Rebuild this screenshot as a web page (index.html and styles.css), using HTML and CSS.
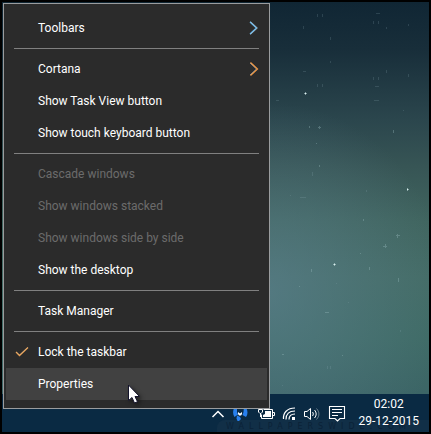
FILE: index.html
```html
<!DOCTYPE html>
<html lang="en">
<head>
<meta charset="utf-8">
<title>Taskbar menu</title>
<link rel="stylesheet" href="styles.css">
</head>
<body>
<main class="screen">
  <div class="wallpaper">
    <svg class="stars" width="166" height="392" viewBox="265 2 166 392" aria-hidden="true">
      <g fill="#d9f0f0">
        <path d="M305 93h1v1h-1zM407 189h1v1h-1zM334 264h1v1h-1z"/>
        <path opacity=".5" d="M305 92h1v3h-1zM304 93h3v1h-3zM407 188h1v3h-1zM407 189h2v1h-2zM334 263h1v3h-1zM333 264h3v1h-3z"/>
      </g>
      <g fill="#9cbcc0" opacity=".35">
        <path d="M319 126h1v3h-1zM318 127h3v1h-3zM309 126h1v2h-1zM393 130h1v3h-1zM316 143h1v1h-1zM319 165h1v2h-1zM363 219h1v2h-1zM397 234h1v4h-1zM396 235h4v1h-4zM385 244h1v4h-1zM383 246h4v1h-4zM360 253h1v1h-1zM369 267h1v3h-1zM311 269h1v3h-1zM398 278h1v4h-1zM299 286h1v1h-1zM325 312h4v1h-4zM282 354h2v1h-2zM342 355h1v1h-1z"/>
      </g>
      <g fill="#8fb0b8" opacity=".2">
        <path d="M376 13h4v1h-4zM303 26h1v3h-1zM386 27h1v2h-1zM408 24h1v2h-1zM373 21h1v3h-1zM378 21h1v3h-1zM317 14h1v3h-1zM322 14h1v3h-1zM330 37h1v3h-1zM330 61h1v2h-1zM303 71h3v1h-3zM386 70h1v3h-1zM408 74h1v3h-1zM375 86h4v1h-4zM373 77h1v3h-1zM378 77h1v3h-1zM317 84h1v3h-1zM322 84h1v3h-1zM276 100h3v1h-3zM374 100h5v1h-5zM403 110h1v1h-1zM312 172h1v4h-1zM300 197h6v1h-6zM290 195h1v1h-1zM366 190h1v2h-1zM336 283h1v1h-1zM348 302h1v1h-1zM400 330h1v2h-1zM327 366h1v3h-1zM330 366h1v3h-1zM282 385h1v1h-1z"/>
      </g>
    </svg>
  </div>
  <footer class="taskbar">
    <span class="watermark" aria-hidden="true">WALLPAPERSWIDE.COM</span>
    <button class="tray" type="button" aria-label="Show hidden icons">
      <svg width="14" height="16" viewBox="0 0 14 16"><path d="M1.500 12 7 6.500l5.500 5.500" fill="none" stroke="#fff" stroke-width="1.500"/></svg>
    </button>
    <button class="tray tray-near" type="button" aria-label="Sync">
      <svg width="16" height="16" viewBox="0 0 16 16"><path d="M5 1 2.500 2.500C.6 5 .6 9.500 2.500 12L6 9.500 5 7zM12 1l2 1.500c2 3 2 7 0 9.500l-3.500-2L11.500 7z" fill="#2880ee"/><path d="M5 10.500 8 12l1 2-2 2H5.500l-1-2.500z" fill="#2880ee"/><path d="m6 7 2 1.500L10 7v2L9 10.500H7L6 9z" fill="#fff"/></svg>
    </button>
    <button class="tray" type="button" aria-label="Battery">
      <svg width="18" height="16" viewBox="0 0 18 16"><path d="M6.500 4.500h9v9h-11v-4M16 7.500h1.500v3H16" fill="none" stroke="#fff"/><path d="M8 6h6v6H6v-2l2-1z" fill="#fff"/><path d="M1.500 4.500h4V7L4 8.500H3L1.500 7zM2.500 2v2M4.500 2v2M3.500 9v3" fill="#0a2a43" stroke="#fff"/></svg>
    </button>
    <button class="tray tray-near" type="button" aria-label="Wireless network">
      <svg width="14" height="16" viewBox="0 0 14 16"><g fill="none" stroke="#fff"><path d="M1.500 14C1 8 5 3 13 3M4 14.500C4 9 7 6 13 6M7 14.500C7 11 9 9 13 9" stroke-width="1.200"/></g><path d="M10 12h3v3h-3z" fill="#fff"/></svg>
    </button>
    <button class="tray tray-near" type="button" aria-label="Volume">
      <svg width="18" height="16" viewBox="0 0 18 16"><g fill="none" stroke="#fff"><path d="M1.500 6.500H4l3.500-3v11l-3.500-3H1.500z"/><path d="M9.500 7c1 1.200 1 2.800 0 4M11.500 5c2.200 2.500 2.200 5.500 0 8"/><path d="M13.500 3.500c3.200 3.500 3.200 7.500 0 11" opacity=".4"/></g></svg>
    </button>
    <button class="tray tray-near" type="button" aria-label="Notifications">
      <svg width="18" height="18" viewBox="0 0 18 18"><path d="M1.500 2.500h15v12H12L9.500 17 7 14.500H1.500zM4 5.500h10M4 8.500h10M4 11.500h6" fill="none" stroke="#fff" stroke-width="1.100"/></svg>
    </button>
    <button class="clock" type="button"><time>02:02</time><time>29-12-2015</time></button>
  </footer>
  <div class="menu" role="menu">
    <button class="item" role="menuitem" type="button">Toolbars
      <svg class="arrow" width="10" height="14" viewBox="0 0 10 14"><path d="m1 1 6.500 6L1 13" fill="none" stroke="#6ebcf0" stroke-width="1.300"/><path d="m1.500 .5 7 6.500-7 6.500" fill="none" stroke="#cfe8f5" stroke-width=".5"/></svg></button>
    <hr class="line">
    <button class="item" role="menuitem" type="button">Cortana
      <svg class="arrow" width="10" height="14" viewBox="0 0 10 14"><path d="m1 1 6.500 6L1 13" fill="none" stroke="#a9d3ee" stroke-width=".6"/><path d="m1.500 .5 7 6.500-7 6.500" fill="none" stroke="#f59a45" stroke-width="1.200"/></svg></button>
    <button class="item" role="menuitem" type="button">Show Task View button</button>
    <button class="item" role="menuitem" type="button">Show touch keyboard button</button>
    <hr class="line">
    <button class="item" role="menuitem" type="button" disabled>Cascade windows</button>
    <button class="item" role="menuitem" type="button" disabled>Show windows stacked</button>
    <button class="item" role="menuitem" type="button" disabled>Show windows side by side</button>
    <button class="item" role="menuitem" type="button">Show the desktop</button>
    <hr class="line">
    <button class="item" role="menuitem" type="button">Task Manager</button>
    <hr class="line">
    <button class="item" role="menuitemcheckbox" aria-checked="true" type="button">
      <svg class="check" width="14" height="10" viewBox="0 0 14 10"><path d="m1 5 3.500 3.500L13 .5" fill="none" stroke="#f0a04c" stroke-width="1.300"/><path d="m1.500 5 3 3L12.500 .5" fill="none" stroke="#b5d4ea" stroke-width=".3"/></svg>Lock the taskbar</button>
    <button class="item item-active" role="menuitem" type="button">Properties</button>
  </div>
  <svg class="cursor" width="14" height="21" viewBox="0 0 14 21" aria-hidden="true"><path d="M.5 1v15.500L4 13.500 6.500 19l3-1.300L7 12.500h4.500z" fill="#fff" stroke="#14142c"/></svg>
</main>
</body>
</html>
```
FILE: styles.css
```css
* {
  box-sizing: border-box;
}

body {
  margin: 0;
  background: #000;
  font: 12px/17px Roboto, "Noto Sans", sans-serif;
  color: #fff;
}

button {
  margin: 0;
  padding: 0;
  border: 0;
  background: none;
  color: inherit;
  font: inherit;
}

svg {
  display: block;
}

.screen {
  position: relative;
  display: flex;
  flex-direction: column;
  min-height: 100vh;
  border: 2px solid #000;
}

.wallpaper {
  flex: 1;
  display: flex;
  justify-content: flex-end;
  background:
    radial-gradient(ellipse 180px 190px at 62% 74%, rgba(94, 130, 146, 0.6), rgba(94, 130, 146, 0)),
    linear-gradient(#102634 0%, #182e3a 12%, #2b464d 30%, #375555 42%, #40655f 56%, #446c66 70%, #3f6b66 86%, #3c6566 100%);
}

.stars {
  margin-right: -2px;
}

.taskbar {
  position: relative;
  display: flex;
  align-items: center;
  justify-content: flex-end;
  height: 38px;
  background: #0a2a43;
}

.watermark {
  position: absolute;
  right: 0;
  bottom: 0;
  width: 212px;
  height: 12px;
  padding-left: 9px;
  border-radius: 8px 0 0;
  background: #112f47;
  color: #0b2238;
  font: 8px/14px "DejaVu Sans", sans-serif;
  letter-spacing: 5px;
  white-space: nowrap;
  overflow: hidden;
}

.tray {
  position: relative;
  margin-left: 9px;
}

.tray-near {
  margin-left: 7px;
}

.clock {
  position: relative;
  display: flex;
  flex-direction: column;
  align-items: center;
  min-width: 60px;
  margin: 0 10px 0 12px;
}

.menu {
  position: absolute;
  top: 1px;
  left: 1px;
  min-width: 267px;
  padding: 8px 2px;
  border: 1px solid #9a9c9e;
  background: #2b2b2b;
}

.item {
  position: relative;
  display: flex;
  align-items: center;
  width: 100%;
  height: 32px;
  padding: 0 8px 0 32px;
}

.item:disabled {
  color: #6b6b6b;
}

.item-active {
  background: #414141;
}

.arrow {
  margin-left: auto;
}

.check {
  position: absolute;
  left: 9px;
}

.line {
  height: 1px;
  margin: 4px 8px;
  border: 0;
  background: #808080;
}

.cursor {
  position: absolute;
  left: 126px;
  top: 382px;
  filter: drop-shadow(2px 2px 2px rgba(0, 0, 0, 0.5));
}
```
